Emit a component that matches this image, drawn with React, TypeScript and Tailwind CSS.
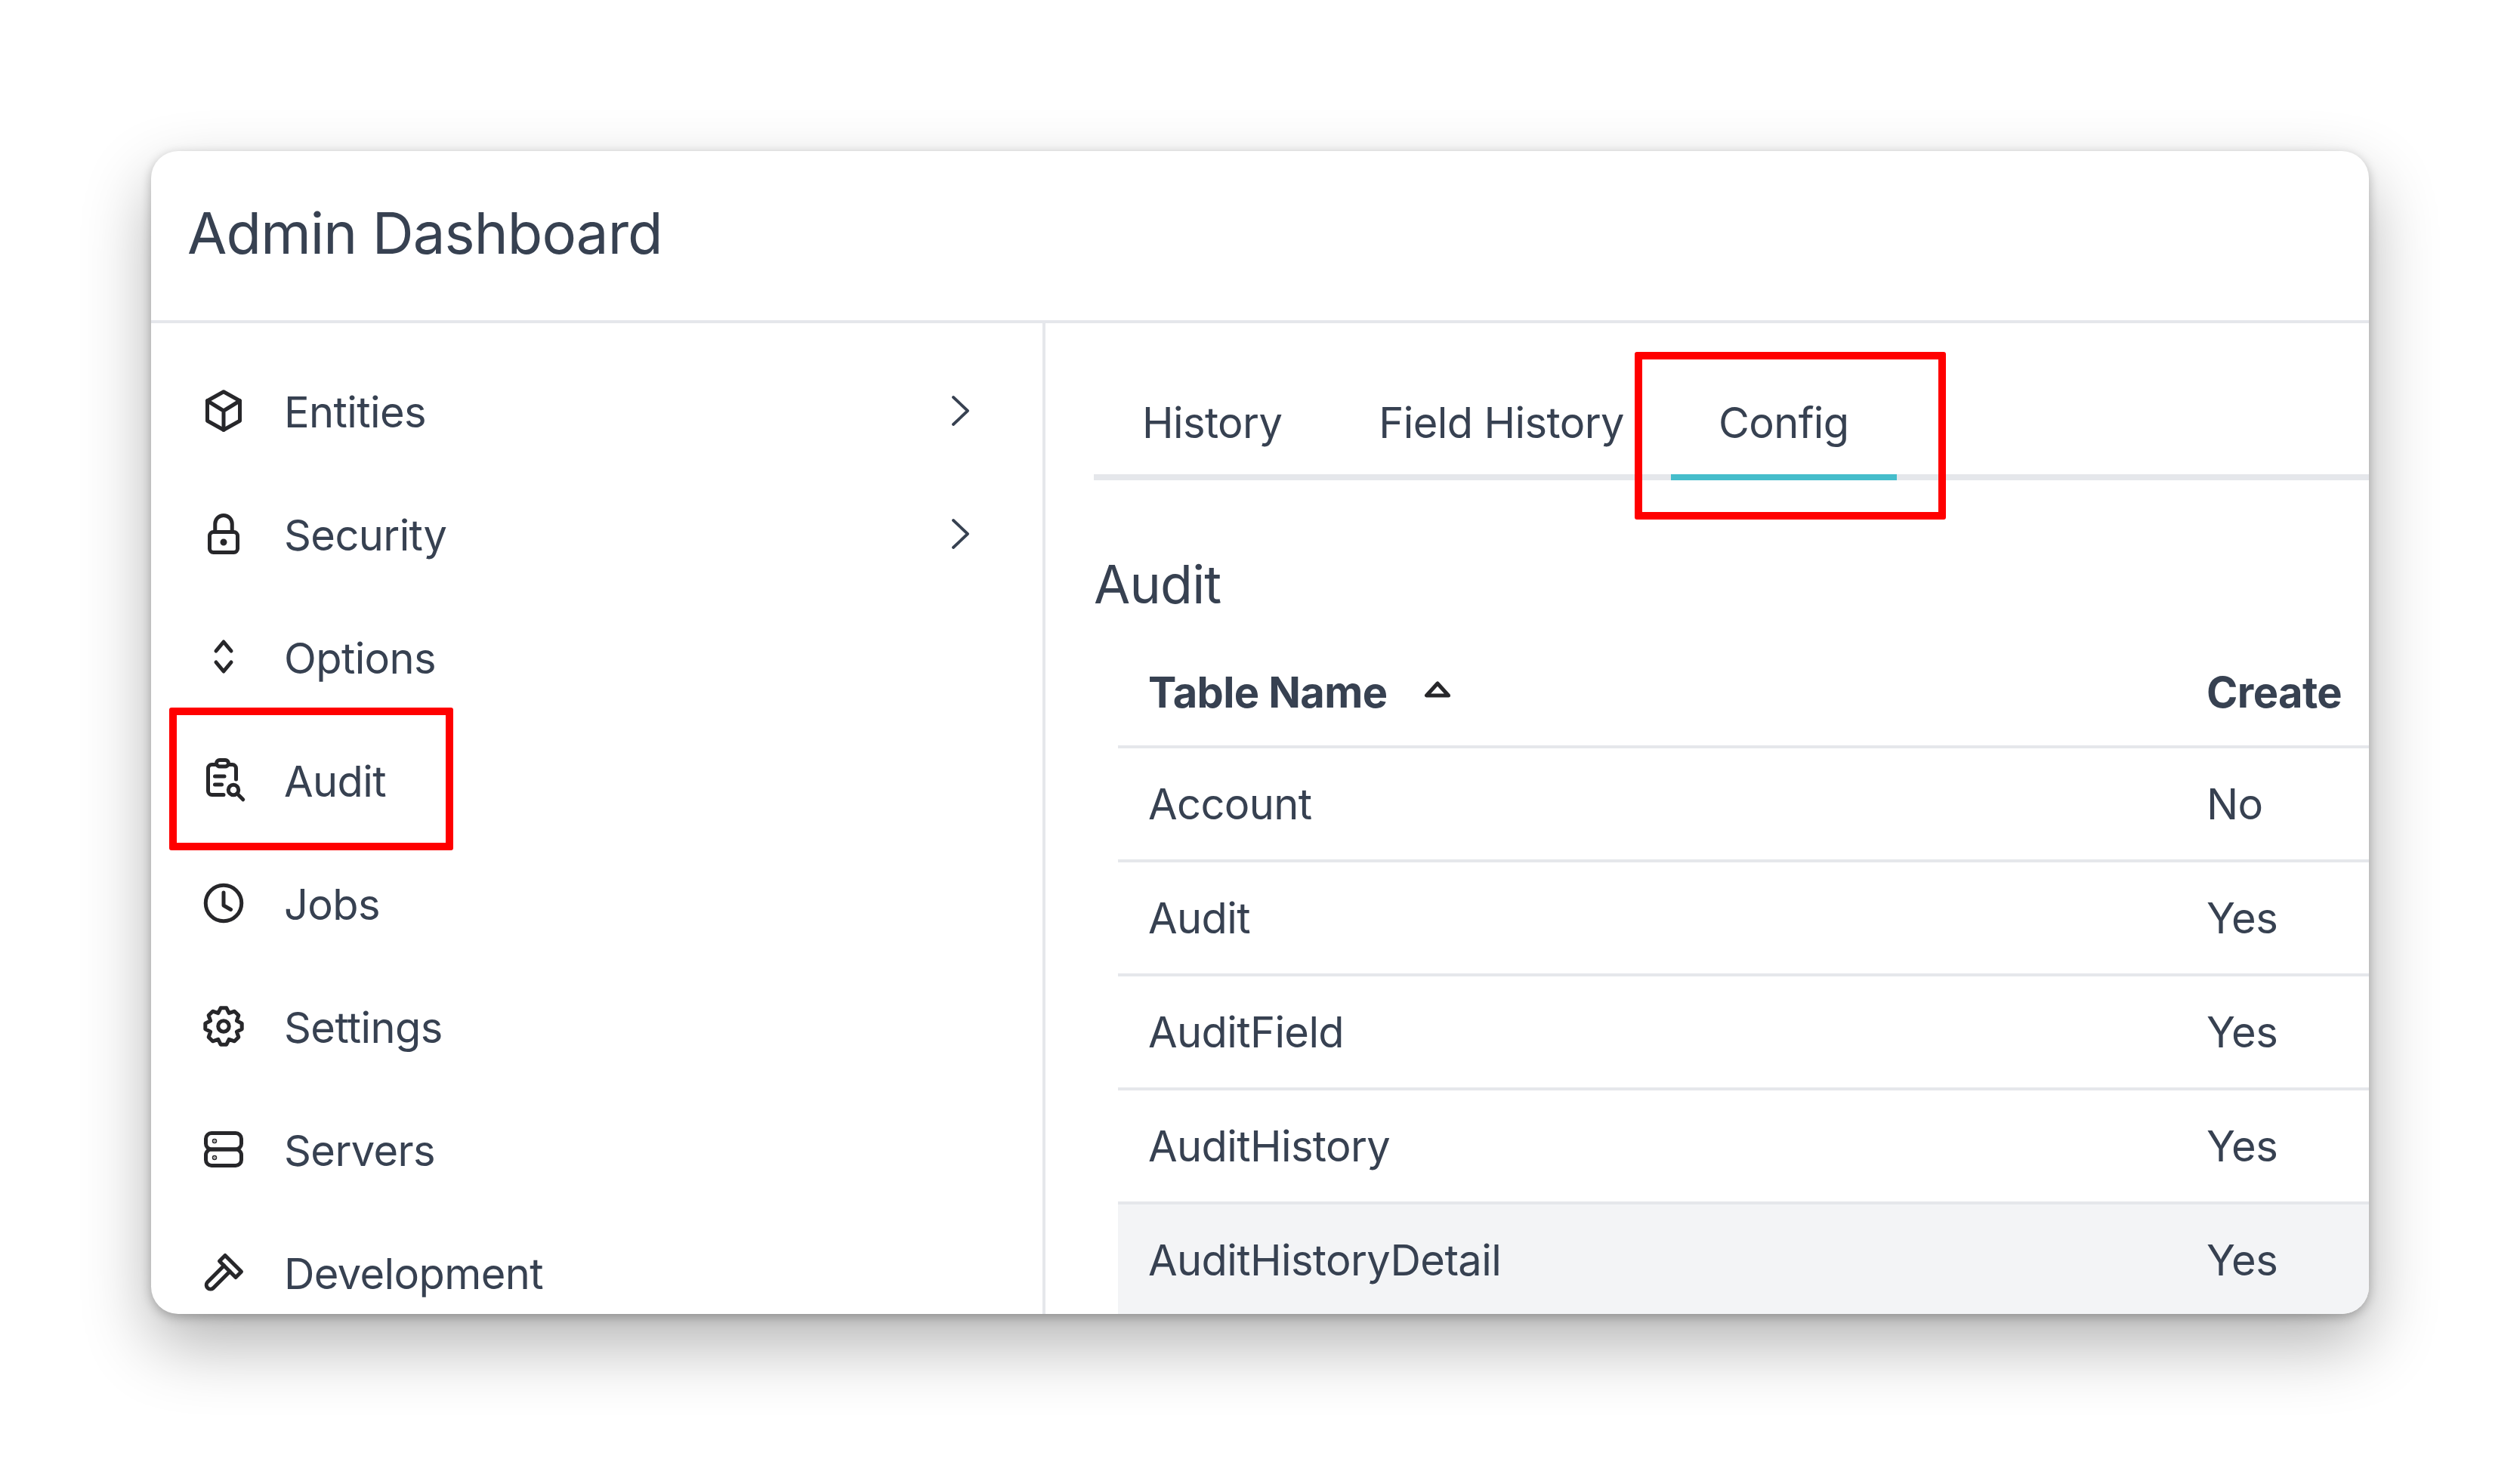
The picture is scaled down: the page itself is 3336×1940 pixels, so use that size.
import React from "react";

const S = ({ children }: { children: React.ReactNode }) => (
  <svg viewBox="0 0 24 24" fill="none" stroke="#27272a" strokeWidth={2} strokeLinecap="round" strokeLinejoin="round" className="w-[60px] h-[60px] shrink-0 mb-[4px]">
    {children}
  </svg>
);

const Cube = () => (
  <S>
    <path d="M12 1.900 20.600 6.700v10.600L12 22.100 3.400 17.300V6.700z" />
    <path d="M3.400 6.700 12 12l8.600-5.300M12 12v10.100" />
  </S>
);
const Lock = () => (
  <S>
    <rect x="4.600" y="11" width="14.800" height="10.800" rx="2" />
    <path d="M7.500 11V6.700a4.500 4.500 0 0 1 9 0V11" />
    <circle cx="12" cy="16.400" r=".8" fill="#27272a" />
  </S>
);
const Options = () => (
  <S>
    <path d="M8 8.800 12 4l4 4.800M8 14.800l4 4.800 4-4.800" />
  </S>
);
const Clip = () => (
  <S>
    <path d="M8 3.800H5.800a2 2 0 0 0-2 2V17.800a2 2 0 0 0 2 2H12" />
    <path d="M15 3.800h1.600a2 2 0 0 1 2 2v5.800" />
    <rect x="8.200" y="1.400" width="6.400" height="3.400" rx="1.700" />
    <path d="M7.400 10h5M7.400 14.400h3.600" />
    <circle cx="17.200" cy="17.200" r="2.700" />
    <path d="M19.300 19.300l3 3" />
  </S>
);
const Clock = () => (
  <S>
    <circle cx="12" cy="12" r="9.500" />
    <path d="M12 6.400v6.800l3.800 2.200" />
  </S>
);

function gearPath() {
  const p = (r: number, deg: number) => {
    const a = (deg * Math.PI) / 180;
    return `${(12 + r * Math.cos(a)).toFixed(2)} ${(12 + r * Math.sin(a)).toFixed(2)}`;
  };
  let d = "";
  for (let k = 0; k < 8; k++) {
    const a = k * 45 - 90;
    d += `${k === 0 ? "M" : "L"}${p(7.500, a - 22.500)} L${p(9.800, a - 9)} L${p(9.800, a + 9)} `;
  }
  return d + "Z";
}
const Gear = () => (
  <S>
    <path d={gearPath()} />
    <circle cx="12" cy="12" r="2.900" />
  </S>
);
const Server = () => (
  <S>
    <rect x="2.600" y="3.400" width="18.800" height="8.600" rx="3" />
    <rect x="2.600" y="12" width="18.800" height="8.600" rx="3" />
    <circle cx="7.200" cy="7.600" r=".3" fill="#27272a" />
    <circle cx="7.200" cy="16.400" r=".3" fill="#27272a" />
  </S>
);
const Hammer = () => (
  <S>
    <path d="M12.800 3 21.400 11.600 18.400 14.600 9.800 6z" />
    <path d="M12.200 8.400 3.400 17.200a2.200 2.200 0 0 0 3.100 3.100L15.300 11.500" />
  </S>
);
const Chevron = () => (
  <svg viewBox="0 0 48 48" fill="none" stroke="#374151" strokeWidth={3.800} strokeLinecap="round" strokeLinejoin="round" className="w-[48px] h-[48px] mb-[4px]">
    <path d="M14 6 33 24 14 42" />
  </svg>
);

const nav: [string, React.ComponentType, boolean][] = [
  ["Entities", Cube, true],
  ["Security", Lock, true],
  ["Options", Options, false],
  ["Audit", Clip, false],
  ["Jobs", Clock, false],
  ["Settings", Gear, false],
  ["Servers", Server, false],
  ["Development", Hammer, false],
];

const rows: [string, string][] = [
  ["Account", "No"],
  ["Audit", "Yes"],
  ["AuditField", "Yes"],
  ["AuditHistory", "Yes"],
  ["AuditHistoryDetail", "Yes"],
];

export default function App() {
  return (
    <div className="w-[3336px] h-[1940px] bg-white p-[200px] font-['Inter',sans-serif] text-[#374151]">
      <div className="relative w-[2936px] h-[1540px] bg-white rounded-[36px] overflow-hidden shadow-[0_40px_90px_rgba(0,0,0,0.3),0_4px_14px_rgba(0,0,0,0.25)]">
        <div className="h-[228px] border-b-[4px] border-[#e5e7eb] pl-[48px] pt-[58px] text-[76px] leading-[100px] tracking-[-0.9px]">
          Admin Dashboard
        </div>
        <div className="flex h-[1312px] text-[56px] tracking-[-0.6px]">
          <div className="w-[1184px] shrink-0 border-r-[4px] border-[#e5e7eb] pt-[36px] pl-[66px] pr-[84px]">
            {nav.map(([label, Icon, chev]) => (
              <div key={label} className="flex items-center h-[163px]">
                <Icon />
                <span className="ml-[50px] flex-1">{label}</span>
                {chev && <Chevron />}
              </div>
            ))}
          </div>
          <div className="flex-1 pl-[64px] overflow-hidden">
            <div className="flex mt-[40px] h-[168px] border-b-[8px] border-[#e5e7eb]">
              <div className="pl-[64px] pr-[62px] pt-[50px]">History</div>
              <div className="pl-[66px] pr-[62px] pt-[50px]">Field History</div>
              <div className="px-[63px] pt-[50px] h-[168px] border-b-[8px] border-[#45bdcb]">Config</div>
            </div>
            <div className="mt-[88px] h-[100px] text-[70px] leading-[100px] tracking-[-0.8px]">Audit</div>
            <div className="ml-[32px] mt-[23px]">
              <div className="flex h-[144px] items-center border-b-[4px] border-[#e5e7eb] pl-[40px] font-bold">
                <div className="flex-1 flex items-center">
                  Table Name
                  <svg viewBox="0 0 36 24" className="w-[36px] h-[24px] ml-[48px] mb-[8px]" fill="none" stroke="#27272a" strokeWidth={5} strokeLinejoin="round">
                    <path d="M18 4 3.500 20h29z" />
                  </svg>
                </div>
                <div className="w-[215px] shrink-0">Create</div>
              </div>
              {rows.map(([n, c], i) => (
                <div key={n} className={"flex h-[151px] items-center pl-[40px] " + (i < 4 ? "border-b-[4px] border-[#e5e7eb]" : "bg-[#f3f4f6] pb-[4px]")}>
                  <div className="flex-1">{n}</div>
                  <div className="w-[215px] shrink-0">{c}</div>
                </div>
              ))}
            </div>
          </div>
        </div>
        <div className="absolute left-[24px] top-[737px] w-[376px] h-[189px] border-[10px] border-[#ff0000] rounded-[3px]" />
        <div className="absolute left-[1964px] top-[266px] w-[412px] h-[222px] border-[10px] border-[#ff0000] rounded-[3px]" />
      </div>
    </div>
  );
}
